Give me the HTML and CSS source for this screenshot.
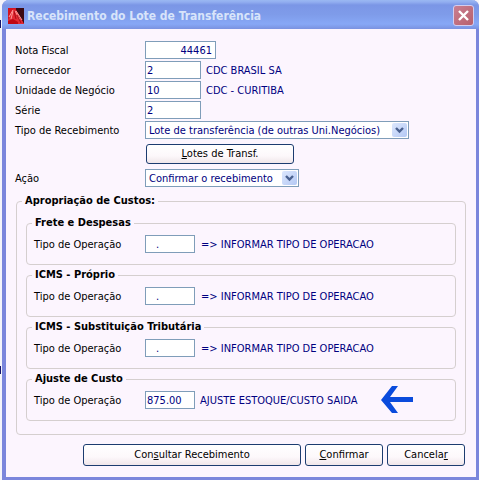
FILE: index.html
```html
<!DOCTYPE html>
<html lang="pt-BR">
<head>
    <meta charset="UTF-8">
    <meta name="viewport" content="width=device-width, initial-scale=1.0">
    <title>Recebimento do Lote de Transferência</title>
    <link rel="stylesheet" href="styles.css">
</head>
<body>
    <div class="window">
        <header class="titlebar">
            <svg class="app-icon" width="16" height="16" viewBox="0 0 16 16" aria-hidden="true">
                <rect width="16" height="16" fill="#d41420"/>
                <path d="M8 0h8v16L8 2z" fill="#3c0a12"/>
                <path d="M0 12L5 1l3 1 8 14H0" fill="#e22a34"/>
                <path d="M1 9l4-7M3 11l2-8M7 3l5 9M8 3l6 9" stroke="#ff9a9a" stroke-width="1" fill="none"/>
                <path d="M6 3l2 8M9 7l4 8" stroke="#a80812" stroke-width="1" fill="none"/>
                <path d="M0 13l5-2 5 3v2H0z" fill="#c00814"/>
            </svg>
            <h1>Recebimento do Lote de Transferência</h1>
            <button type="button" class="close" aria-label="Fechar">
                <svg width="19" height="19" viewBox="0 0 19 19" aria-hidden="true">
                    <path d="M5 5l9 9M14 5l-9 9" stroke="#fff" stroke-width="2.4"/>
                </svg>
            </button>
        </header>

        <form class="content">
            <div class="row">
                <label for="nota">Nota Fiscal</label>
                <input type="text" id="nota" class="nota" value="44461">
            </div>
            <div class="row">
                <label for="fornecedor">Fornecedor</label>
                <input type="text" id="fornecedor" value="2">
                <span class="info">CDC BRASIL SA</span>
            </div>
            <div class="row">
                <label for="unidade">Unidade de Negócio</label>
                <input type="text" id="unidade" value="10">
                <span class="info">CDC - CURITIBA</span>
            </div>
            <div class="row">
                <label for="serie">Série</label>
                <input type="text" id="serie" value="2">
            </div>
            <div class="row">
                <label for="tipo">Tipo de Recebimento</label>
                <div class="combo combo-wide">
                    <select id="tipo">
                        <option>Lote de transferência (de outras Uni.Negócios)</option>
                    </select>
                    <svg class="arrow" width="15" height="14" viewBox="0 0 15 14" aria-hidden="true">
                        <path d="M4 5l3.5 3.5L11 5" stroke="#4a6190" stroke-width="2.4" fill="none"/>
                    </svg>
                </div>
            </div>
            <div class="row row-button">
                <button type="button" class="btn btn-lotes"><u>L</u>otes de Transf.</button>
            </div>
            <div class="row">
                <label for="acao">Ação</label>
                <div class="combo">
                    <select id="acao">
                        <option>Confirmar o recebimento</option>
                    </select>
                    <svg class="arrow" width="15" height="14" viewBox="0 0 15 14" aria-hidden="true">
                        <path d="M4 5l3.5 3.5L11 5" stroke="#4a6190" stroke-width="2.4" fill="none"/>
                    </svg>
                </div>
            </div>

            <fieldset class="custos">
                <legend>Apropriação de Custos:</legend>
                <fieldset class="grupo">
                    <legend>Frete e Despesas</legend>
                    <div class="row">
                        <label for="op-frete">Tipo de Operação</label>
                        <input type="text" id="op-frete" class="vazio" value=".">
                        <span class="info">=&gt; INFORMAR TIPO DE OPERACAO</span>
                    </div>
                </fieldset>
                <fieldset class="grupo">
                    <legend>ICMS - Próprio</legend>
                    <div class="row">
                        <label for="op-icms">Tipo de Operação</label>
                        <input type="text" id="op-icms" class="vazio" value=".">
                        <span class="info">=&gt; INFORMAR TIPO DE OPERACAO</span>
                    </div>
                </fieldset>
                <fieldset class="grupo">
                    <legend>ICMS - Substituição Tributária</legend>
                    <div class="row">
                        <label for="op-st">Tipo de Operação</label>
                        <input type="text" id="op-st" class="vazio" value=".">
                        <span class="info">=&gt; INFORMAR TIPO DE OPERACAO</span>
                    </div>
                </fieldset>
                <fieldset class="grupo">
                    <legend>Ajuste de Custo</legend>
                    <div class="row">
                        <label for="op-ajuste">Tipo de Operação</label>
                        <input type="text" id="op-ajuste" value="875.00">
                        <span class="info">AJUSTE ESTOQUE/CUSTO SAIDA</span>
                    </div>
                    <svg class="seta" width="33" height="28" viewBox="0 0 33 28" aria-hidden="true">
                        <path d="M0 14L11 0h6L9 11h23v5H9l8 11h-6z" fill="#0a4bdc"/>
                    </svg>
                </fieldset>
            </fieldset>

            <div class="actions">
                <button type="button" class="btn btn-consultar">Con<u>s</u>ultar Recebimento</button>
                <button type="button" class="btn"><u>C</u>onfirmar</button>
                <button type="button" class="btn">Cancela<u>r</u></button>
            </div>
        </form>
    </div>
</body>
</html>
```

FILE: styles.css
```css
* {
    box-sizing: border-box;
}

body {
    margin: 0;
    padding-left: 2px;
    /* edges of the screen behind the window */
    background:
        linear-gradient(#14146a, #14146a) 0 20px / 1px 8px no-repeat,
        linear-gradient(#14146a, #14146a) 0 366px / 1px 8px no-repeat,
        #f4f4fa;
    font-family: 'DejaVu Sans Condensed', 'DejaVu Sans', Tahoma, sans-serif;
    font-size: 11px;
    line-height: 14px;
    color: #000;
}

.window {
    border: solid #7b86dc;
    border-width: 0 3px 3px 4px;
    border-radius: 7px 7px 0 0;
    background-color: #fcf5fe;
}

.titlebar {
    display: flex;
    align-items: center;
    height: 29px;
    margin: 0 -3px 0 -4px;
    padding: 2px 5px 0 6px;
    border-radius: 7px 7px 0 0;
    background: linear-gradient(#9ab8f2 0, #92aef0 2px, #7b96e6 5px, #7f9cea 15px, #87a8f6 24px, #7a92e0 29px);
}

.titlebar h1 {
    flex: 1;
    margin: 0 0 0 3px;
    font-size: 12px;
    line-height: 18px;
    color: #d8e4fa;
}

.close {
    display: flex;
    width: 21px;
    height: 21px;
    padding: 0;
    border: 1px solid #d3cdee;
    border-radius: 3px;
    background: linear-gradient(135deg, #c97f92, #b8606c);
}

.content {
    padding: 12px 9px 11px;
}

.row {
    display: flex;
    align-items: center;
    height: 18px;
    margin-bottom: 2px;
}

.row label {
    width: 130px;
    padding-top: 2px;
}

.row input {
    width: 56px;
    height: 18px;
    padding: 0 1px;
    border: 1px solid #7f9db9;
    background-color: #fff;
    font: inherit;
    color: #000080;
}

.row .nota {
    width: 71px;
    padding-right: 3px;
    text-align: right;
}

.info {
    margin-left: 5px;
    padding-top: 2px;
    color: #000080;
}

.combo {
    position: relative;
    width: 154px;
}

.combo-wide {
    width: 264px;
}

.combo select {
    display: block;
    width: 100%;
    height: 18px;
    padding: 2px 18px 0 3px;
    border: 1px solid #7f9db9;
    border-radius: 0;
    background-color: #fff;
    font: inherit;
    color: #000080;
    appearance: none;
}

.arrow {
    position: absolute;
    top: 2px;
    right: 2px;
    border-radius: 2px;
    background: linear-gradient(135deg, #dce7fd, #b4c8f4);
    pointer-events: none;
}

.row-button {
    height: 20px;
    margin: 5px 0;
    padding-left: 131px;
}

.btn {
    width: 78px;
    height: 22px;
    padding: 0;
    border: 1px solid #1c3c70;
    border-radius: 3px;
    background: linear-gradient(#fff, #fdf8fb 60%, #f0e6ea);
    font: inherit;
    color: #000;
}

.btn-lotes {
    width: 148px;
    height: 20px;
}

.btn-consultar {
    width: 218px;
}

fieldset {
    margin: 0;
    border: 1px solid #d5cfcf;
    border-radius: 4px;
}

legend {
    padding: 0 3px;
    font-weight: bold;
}

.custos {
    margin: 7px 1px 0;
    padding: 8px 9px 13px;
}

.custos > legend {
    margin-left: -4px;
}

.grupo {
    position: relative;
    margin-bottom: 3px;
    padding: 5px 7px 11px;
}

.grupo:last-child {
    margin-bottom: 0;
}

.grupo > legend {
    margin-left: -2px;
}

.grupo .row {
    margin-bottom: 0;
}

.grupo label {
    width: 111px;
}

.grupo input {
    width: 50px;
}

.grupo .vazio {
    padding-left: 10px;
}

.grupo .vazio + .info {
    margin-left: 6px;
}

/* points at the cost adjustment */
.seta {
    position: absolute;
    top: 0;
    right: 41px;
}

.actions {
    display: flex;
    justify-content: flex-end;
    gap: 4px;
    margin-top: 9px;
    padding-right: 2px;
}
```
